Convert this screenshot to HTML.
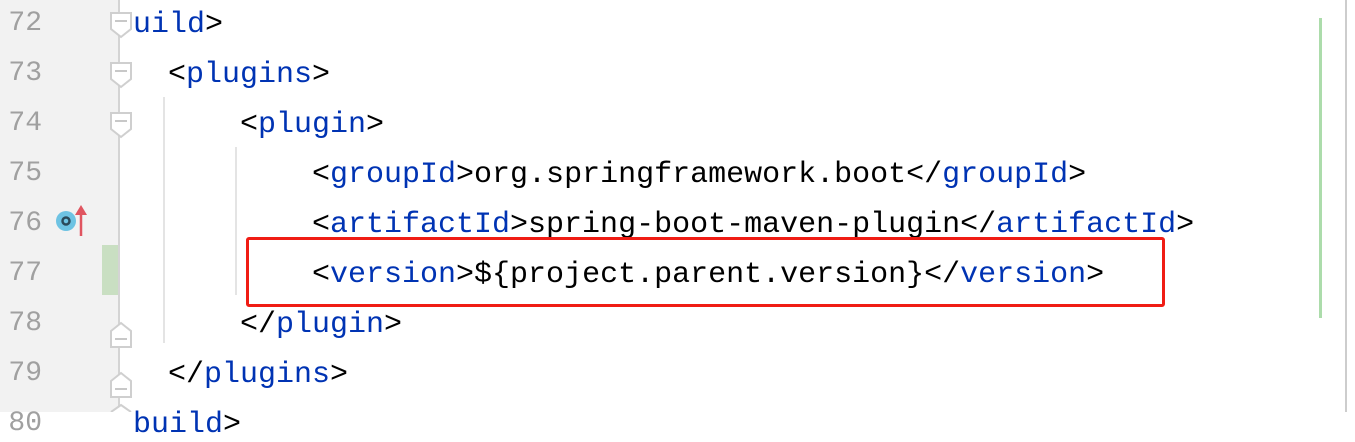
<!DOCTYPE html>
<html><head><style>
html,body{margin:0;padding:0;width:1355px;height:412px;overflow:hidden;background:#fff}
.g{position:absolute;left:0;top:0;width:118px;height:412px;background:#f2f2f2}
.gl{position:absolute;left:118px;top:0;width:2px;height:412px;background:#d4d4d4}
.ln{position:absolute;left:0;width:42px;text-align:right;font:28px "Liberation Mono",monospace;color:#a0a0a0}
.c{position:absolute;font:30px "Liberation Mono",monospace;color:#000;white-space:pre}
.t{color:#0033b3}
.v{position:absolute;width:2px;background:#e4e4e4}
</style></head><body>
<div class="g"></div>
<div class="gl"></div>
<div class="ln" style="top:8px">72</div>
<div class="ln" style="top:58px">73</div>
<div class="ln" style="top:108px">74</div>
<div class="ln" style="top:158px">75</div>
<div class="ln" style="top:208px">76</div>
<div class="ln" style="top:258px">77</div>
<div class="ln" style="top:308px">78</div>
<div class="ln" style="top:358px">79</div>
<div class="ln" style="top:408px">80</div>
<div style="position:absolute;left:102px;top:245px;width:16px;height:50px;background:#c9dfc2"></div>
<svg style="position:absolute;left:0;top:0" width="140" height="412">
<circle cx="66" cy="221" r="10" fill="#6ec3e3"/><circle cx="66" cy="221" r="3.5" fill="none" stroke="#2b4a5a" stroke-width="2.5"/>
<line x1="81" y1="236" x2="81" y2="210" stroke="#e05560" stroke-width="2.5"/><path d="M75 215 L81 205 L87 215 Z" fill="#e05560"/>
<g fill="#fff" stroke="#cfcfcf" stroke-width="2">
<path d="M111 13 H131 V29 L121 37 L111 29 Z"/><path d="M111 63 H131 V79 L121 87 L111 79 Z"/><path d="M111 113 H131 V129 L121 137 L111 129 Z"/>
<path d="M111 331 L121 323 L131 331 V347 H111 Z"/><path d="M111 381 L121 373 L131 381 V397 H111 Z"/><path d="M111 412 L121 405 L131 412"/>
</g>
<g stroke="#c8c8c8" stroke-width="2"><line x1="115" y1="21" x2="127" y2="21"/><line x1="115" y1="71" x2="127" y2="71"/><line x1="115" y1="121" x2="127" y2="121"/><line x1="115" y1="339" x2="127" y2="339"/><line x1="115" y1="389" x2="127" y2="389"/></g>
</svg>
<div class="v" style="left:163px;top:97px;height:246px"></div>
<div class="v" style="left:235px;top:147px;height:148px"></div>
<div class="c" style="left:133px;top:8px"><span class="t">uild</span>&gt;</div>
<div class="c" style="left:168px;top:58px">&lt;<span class="t">plugins</span>&gt;</div>
<div class="c" style="left:240px;top:108px">&lt;<span class="t">plugin</span>&gt;</div>
<div class="c" style="left:312px;top:158px">&lt;<span class="t">groupId</span>&gt;org.springframework.boot&lt;/<span class="t">groupId</span>&gt;</div>
<div class="c" style="left:312px;top:208px">&lt;<span class="t">artifactId</span>&gt;spring-boot-maven-plugin&lt;/<span class="t">artifactId</span>&gt;</div>
<div class="c" style="left:312px;top:258px">&lt;<span class="t">version</span>&gt;${project.parent.version}&lt;/<span class="t">version</span>&gt;</div>
<div class="c" style="left:240px;top:308px">&lt;/<span class="t">plugin</span>&gt;</div>
<div class="c" style="left:168px;top:358px">&lt;/<span class="t">plugins</span>&gt;</div>
<div class="c" style="left:133px;top:408px"><span class="t">build</span>&gt;</div>
<div style="position:absolute;left:246px;top:237px;width:913px;height:64px;border:3px solid #f01c14;border-radius:3px"></div>
<div style="position:absolute;left:1319px;top:18px;width:3px;height:300px;background:#acdcab"></div>
<div style="position:absolute;left:1345px;top:0;width:2px;height:412px;background:#cdcdcd"></div>
</body></html>
